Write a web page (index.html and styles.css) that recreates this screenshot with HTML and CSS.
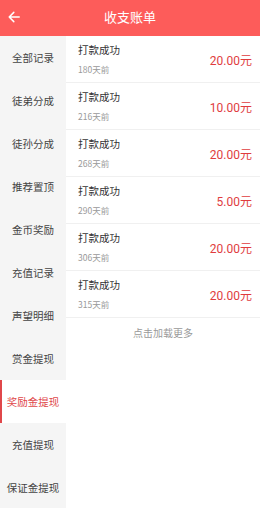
FILE: index.html
```html
<!DOCTYPE html>
<html lang="zh">
<head>
<meta charset="utf-8">
<link rel="stylesheet" href="styles.css">
</head>
<body>
<div class="app">
  <header class="topbar">
    <span class="back">
      <svg width="12" height="12" viewBox="0 0 12 12"><path d="M11.2 6H1.2M5.8 1.4L1.2 6L5.8 10.6" fill="none" stroke="#fff" stroke-width="1.5" stroke-linecap="round" stroke-linejoin="round"/></svg>
    </span>
    <h1 class="title">收支账单</h1>
  </header>
  <div class="main">
    <nav class="side">
      <div class="tab">全部记录</div>
      <div class="tab">徒弟分成</div>
      <div class="tab">徒孙分成</div>
      <div class="tab">推荐置顶</div>
      <div class="tab">金币奖励</div>
      <div class="tab">充值记录</div>
      <div class="tab">声望明细</div>
      <div class="tab">赏金提现</div>
      <div class="tab active">奖励金提现</div>
      <div class="tab">充值提现</div>
      <div class="tab">保证金提现</div>
    </nav>
    <section class="list">
      <div class="row"><div class="info"><div class="name">打款成功</div><div class="date">180天前</div></div><div class="amt">20.00元</div></div>
      <div class="row"><div class="info"><div class="name">打款成功</div><div class="date">216天前</div></div><div class="amt">10.00元</div></div>
      <div class="row"><div class="info"><div class="name">打款成功</div><div class="date">268天前</div></div><div class="amt">20.00元</div></div>
      <div class="row"><div class="info"><div class="name">打款成功</div><div class="date">290天前</div></div><div class="amt">5.00元</div></div>
      <div class="row"><div class="info"><div class="name">打款成功</div><div class="date">306天前</div></div><div class="amt">20.00元</div></div>
      <div class="row"><div class="info"><div class="name">打款成功</div><div class="date">315天前</div></div><div class="amt">20.00元</div></div>
      <div class="more">点击加载更多</div>
    </section>
  </div>
</div>
</body>
</html>
```
FILE: styles.css
```css
* { box-sizing: border-box; }
html, body { margin: 0; padding: 0; background: #fff; }
body { font-family: "Noto Sans CJK SC", "Noto Sans", sans-serif; color: #333; }
.app { width: 260px; height: 508px; overflow: hidden; display: flex; flex-direction: column; }
.topbar { height: 36px; background: #fd5c5a; display: flex; align-items: center; justify-content: center; position: relative; flex: none; }
.back { position: absolute; left: 8px; top: 11px; width: 12px; height: 12px; display: flex; }
.title { margin: 0 0 3px; font-size: 13px; font-weight: normal; color: #fff; line-height: 1; }
.main { flex: 1; display: flex; min-height: 0; }
.side { width: 66px; flex: none; background: #f5f5f5; display: flex; flex-direction: column; }
.tab { height: 43px; flex: none; display: flex; align-items: center; justify-content: center; font-size: 10.5px; color: #444; }
.tab.active { background: #fff; color: #e0474a; border-left: 2px solid #e0474a; padding-right: 2px; }
.list { flex: 1; display: flex; flex-direction: column; }
.row { height: 47px; flex: none; display: flex; align-items: center; justify-content: space-between; padding: 0 8px 0 12px; border-bottom: 1px solid #f0f0f0; }
.info { display: flex; flex-direction: column; }
.name { font-size: 10.5px; color: #333; line-height: 14px; margin-top: 0; }
.date { font-size: 8.5px; color: #999; line-height: 12px; margin-top: 6px; }
.amt { font-size: 12px; color: #e03c3e; font-family: "Roboto", "Noto Sans CJK SC", sans-serif; margin-top: 1px; }
.more { text-align: center; font-size: 10px; color: #999; padding-top: 7px; }
```
